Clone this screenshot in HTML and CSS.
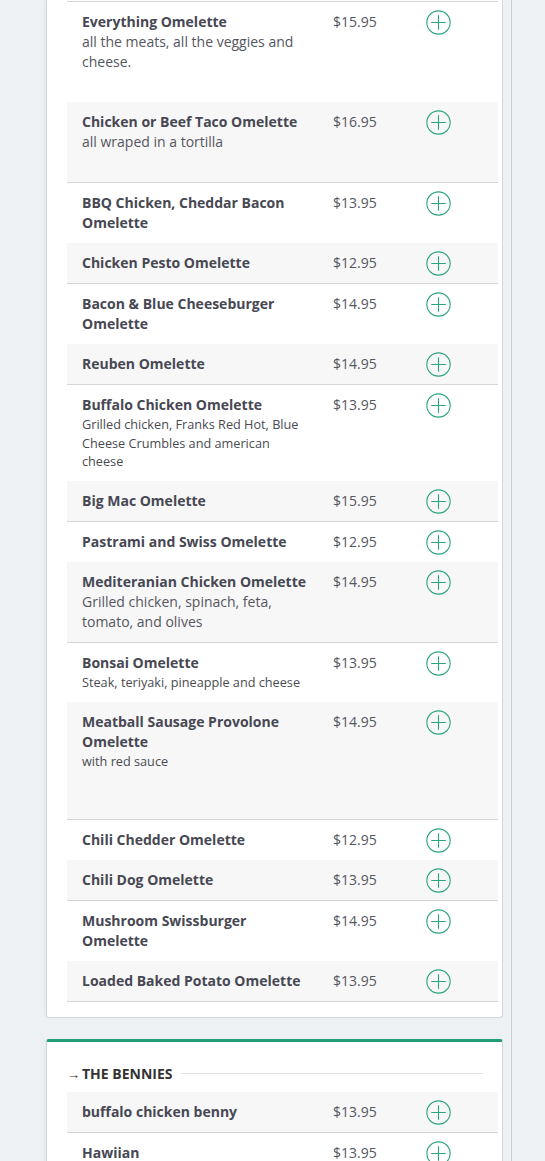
FILE: index.html
```html
<!DOCTYPE html>
<html>
<head>
<meta charset="utf-8">
<link rel="stylesheet" href="styles.css">
</head>
<body>
<div class="page">
  <div class="column">
    <section class="card card-cut">
      <div class="menu">
        <div class="item">
          <div class="info"><div class="name">Everything Omelette</div><div class="desc">all the meats, all the veggies and cheese.<br>&nbsp;</div></div>
          <div class="price">$15.95</div>
          <div class="add"><svg viewBox="0 0 24 24"><circle cx="12" cy="12" r="11.2"/><path d="M12 5v14M5 12h14"/></svg></div>
        </div>
        <div class="item alt">
          <div class="info"><div class="name">Chicken or Beef Taco Omelette</div><div class="desc">all wraped in a tortilla<br>&nbsp;</div></div>
          <div class="price">$16.95</div>
          <div class="add"><svg viewBox="0 0 24 24"><circle cx="12" cy="12" r="11.2"/><path d="M12 5v14M5 12h14"/></svg></div>
        </div>
        <div class="item">
          <div class="info"><div class="name">BBQ Chicken, Cheddar Bacon Omelette</div></div>
          <div class="price">$13.95</div>
          <div class="add"><svg viewBox="0 0 24 24"><circle cx="12" cy="12" r="11.2"/><path d="M12 5v14M5 12h14"/></svg></div>
        </div>
        <div class="item alt">
          <div class="info"><div class="name">Chicken Pesto Omelette</div></div>
          <div class="price">$12.95</div>
          <div class="add"><svg viewBox="0 0 24 24"><circle cx="12" cy="12" r="11.2"/><path d="M12 5v14M5 12h14"/></svg></div>
        </div>
        <div class="item">
          <div class="info"><div class="name">Bacon &amp; Blue Cheeseburger Omelette</div></div>
          <div class="price">$14.95</div>
          <div class="add"><svg viewBox="0 0 24 24"><circle cx="12" cy="12" r="11.2"/><path d="M12 5v14M5 12h14"/></svg></div>
        </div>
        <div class="item alt">
          <div class="info"><div class="name">Reuben Omelette</div></div>
          <div class="price">$14.95</div>
          <div class="add"><svg viewBox="0 0 24 24"><circle cx="12" cy="12" r="11.2"/><path d="M12 5v14M5 12h14"/></svg></div>
        </div>
        <div class="item">
          <div class="info"><div class="name">Buffalo Chicken Omelette</div><div class="desc small">Grilled chicken, Franks Red Hot, Blue Cheese Crumbles and american cheese</div></div>
          <div class="price">$13.95</div>
          <div class="add"><svg viewBox="0 0 24 24"><circle cx="12" cy="12" r="11.2"/><path d="M12 5v14M5 12h14"/></svg></div>
        </div>
        <div class="item alt">
          <div class="info"><div class="name">Big Mac Omelette</div></div>
          <div class="price">$15.95</div>
          <div class="add"><svg viewBox="0 0 24 24"><circle cx="12" cy="12" r="11.2"/><path d="M12 5v14M5 12h14"/></svg></div>
        </div>
        <div class="item">
          <div class="info"><div class="name">Pastrami and Swiss Omelette</div></div>
          <div class="price">$12.95</div>
          <div class="add"><svg viewBox="0 0 24 24"><circle cx="12" cy="12" r="11.2"/><path d="M12 5v14M5 12h14"/></svg></div>
        </div>
        <div class="item alt">
          <div class="info"><div class="name">Mediteranian Chicken Omelette</div><div class="desc">Grilled chicken, spinach, feta, tomato, and olives</div></div>
          <div class="price">$14.95</div>
          <div class="add"><svg viewBox="0 0 24 24"><circle cx="12" cy="12" r="11.2"/><path d="M12 5v14M5 12h14"/></svg></div>
        </div>
        <div class="item">
          <div class="info"><div class="name">Bonsai Omelette</div><div class="desc small">Steak, teriyaki, pineapple and cheese</div></div>
          <div class="price">$13.95</div>
          <div class="add"><svg viewBox="0 0 24 24"><circle cx="12" cy="12" r="11.2"/><path d="M12 5v14M5 12h14"/></svg></div>
        </div>
        <div class="item alt">
          <div class="info"><div class="name">Meatball Sausage Provolone Omelette</div><div class="desc small tall">with red sauce<br>&nbsp;<br>&nbsp;</div></div>
          <div class="price">$14.95</div>
          <div class="add"><svg viewBox="0 0 24 24"><circle cx="12" cy="12" r="11.2"/><path d="M12 5v14M5 12h14"/></svg></div>
        </div>
        <div class="item">
          <div class="info"><div class="name">Chili Chedder Omelette</div></div>
          <div class="price">$12.95</div>
          <div class="add"><svg viewBox="0 0 24 24"><circle cx="12" cy="12" r="11.2"/><path d="M12 5v14M5 12h14"/></svg></div>
        </div>
        <div class="item alt">
          <div class="info"><div class="name">Chili Dog Omelette</div></div>
          <div class="price">$13.95</div>
          <div class="add"><svg viewBox="0 0 24 24"><circle cx="12" cy="12" r="11.2"/><path d="M12 5v14M5 12h14"/></svg></div>
        </div>
        <div class="item">
          <div class="info"><div class="name">Mushroom Swissburger Omelette</div></div>
          <div class="price">$14.95</div>
          <div class="add"><svg viewBox="0 0 24 24"><circle cx="12" cy="12" r="11.2"/><path d="M12 5v14M5 12h14"/></svg></div>
        </div>
        <div class="item alt">
          <div class="info"><div class="name">Loaded Baked Potato Omelette</div></div>
          <div class="price">$13.95</div>
          <div class="add"><svg viewBox="0 0 24 24"><circle cx="12" cy="12" r="11.2"/><path d="M12 5v14M5 12h14"/></svg></div>
        </div>
      </div>
    </section>

    <section class="card card-active">
      <h2 class="section-title"><span class="arrow">&#8594;</span><span class="title-text">THE BENNIES</span><span class="rule"></span></h2>
      <div class="menu">
        <div class="item alt">
          <div class="info"><div class="name">buffalo chicken benny</div></div>
          <div class="price">$13.95</div>
          <div class="add"><svg viewBox="0 0 24 24"><circle cx="12" cy="12" r="11.2"/><path d="M12 5v14M5 12h14"/></svg></div>
        </div>
        <div class="item">
          <div class="info"><div class="name">Hawiian</div></div>
          <div class="price">$13.95</div>
          <div class="add"><svg viewBox="0 0 24 24"><circle cx="12" cy="12" r="11.2"/><path d="M12 5v14M5 12h14"/></svg></div>
        </div>
        <div class="item alt">
          <div class="info"><div class="name">Florentine</div></div>
          <div class="price">$12.95</div>
          <div class="add"><svg viewBox="0 0 24 24"><circle cx="12" cy="12" r="11.2"/><path d="M12 5v14M5 12h14"/></svg></div>
        </div>
      </div>
    </section>
  </div>
</div>
</body>
</html>
```

FILE: styles.css
```css
html, body {
  margin: 0;
  padding: 0;
  background: #eef1f4;
  font-family: "Open Sans", "Liberation Sans", sans-serif;
  color: #4a4b55;
}

.page {
  height: 1161px;
  overflow: hidden;
}

.column {
  width: 512px;
  min-height: 1161px;
  box-sizing: border-box;
  border-right: 1px solid #c9cdd2;
  padding-left: 46px;
  padding-right: 8px;
}

.card {
  background: #fff;
  border: 1px solid #d3d6da;
  border-radius: 3px;
  padding: 0 4px 15px 20px;
  box-shadow: -2px 0 3px rgba(0, 0, 0, 0.03);
}

.card-cut {
  border-top: 0;
  border-top-left-radius: 0;
  border-top-right-radius: 0;
  padding-top: 1px;
}

.card-cut .menu {
  border-top: 1px solid #d4d4d4;
}

.card-active {
  margin-top: 21px;
  border-top: 3px solid #1f9e77;
  padding-top: 22px;
}

.section-title {
  display: flex;
  align-items: center;
  margin: 0 15px 8px 0;
  font-size: 14px;
  line-height: 20px;
  font-weight: 700;
  letter-spacing: 0;
  color: #333;
}

.arrow {
  font-size: 13px;
  font-weight: 400;
  margin-right: 2px;
  color: #333;
}

.rule {
  flex: 1;
  height: 1px;
  background: #e4e4e4;
  margin-left: 8px;
}

.item {
  display: grid;
  grid-template-columns: 251px 93px 1fr;
  padding: 10px 0;
}

.item.alt {
  background: #f7f7f7;
  border-bottom: 1px solid #d4d4d4;
}

.info {
  padding: 0 10px 0 15px;
}

.name {
  font-size: 14px;
  line-height: 20px;
  font-weight: 700;
  color: #474853;
}

.desc {
  font-size: 14px;
  line-height: 20px;
  color: #55565e;
}

.desc.small {
  font-size: 12.7px;
  line-height: 18.7px;
  color: #4a4b52;
}

.desc.small.tall {
  line-height: 19px;
}

.price {
  padding-left: 15px;
  font-size: 14px;
  line-height: 20px;
  color: #55565e;
}

.add {
  padding-left: 15px;
  height: 20px;
}

.add svg {
  display: block;
  width: 25px;
  height: 25px;
  margin-top: -2px;
  fill: none;
  stroke: #2aa381;
  stroke-width: 1.05;
}
```
